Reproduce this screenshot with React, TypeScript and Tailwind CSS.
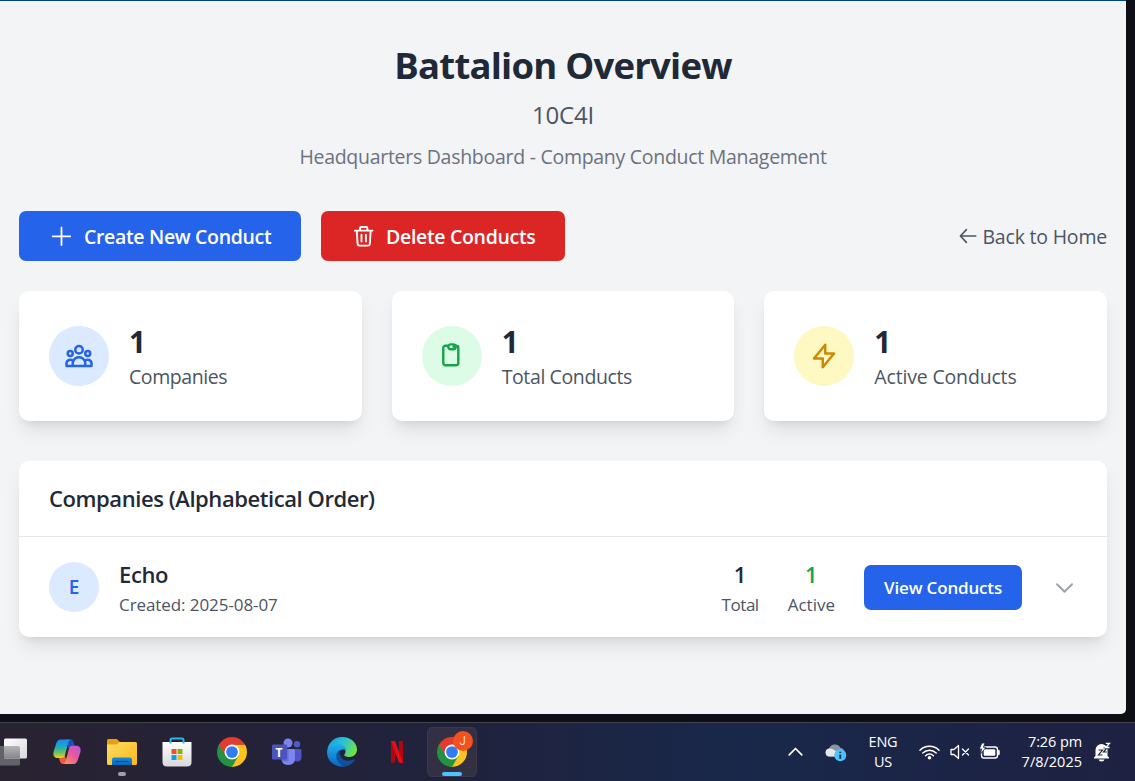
import React from "react";

function PlusIcon() {
  return (
    <svg className="h-5 w-5 shrink-0" viewBox="0 0 20 20" fill="none" stroke="currentColor" strokeWidth="1.8" strokeLinecap="round">
      <path d="M10.500 1.500v17.500M1.700 10.300h17.800" />
    </svg>
  );
}

function TrashIcon() {
  return (
    <svg className="h-[22px] w-5 shrink-0" viewBox="0 0 20 22" fill="none" stroke="currentColor" strokeWidth="1.9" strokeLinecap="round" strokeLinejoin="round">
      <path d="M.9 5.600h17.600M2.700 5.800l.9 13.100c.1 1.100.8 1.700 1.800 1.700h8.600c1 0 1.700-.6 1.800-1.700l.9-13.100M6 5.400V3.200C6 2.500 6.500 2 7.200 2h5c.7 0 1.200.5 1.200 1.200v2.200M7.500 9.600v7M11.900 9.600v7" />
    </svg>
  );
}

function BackIcon() {
  return (
    <svg className="h-[16px] w-[18px] shrink-0" viewBox="0 0 18 16" fill="none" stroke="currentColor" strokeWidth="1.6" strokeLinecap="round" strokeLinejoin="round">
      <path d="M7.4 1.6 1.4 8l6 6.4M1.6 8h15.2" />
    </svg>
  );
}

function GroupIcon() {
  return (
    <svg className="h-[30px] w-[30px]" viewBox="0 0 24 24" fill="none" stroke="currentColor" strokeWidth="2" strokeLinecap="round" strokeLinejoin="round">
      <path d="M17 20h5v-2a3 3 0 00-5.356-1.857M17 20H7m10 0v-2c0-.656-.126-1.283-.356-1.857M7 20H2v-2a3 3 0 015.356-1.857M7 20v-2c0-.656.126-1.283.356-1.857m0 0a5.002 5.002 0 019.288 0M15 7a3 3 0 11-6 0 3 3 0 016 0zm6 3a2 2 0 11-4 0 2 2 0 014 0zM7 10a2 2 0 11-4 0 2 2 0 014 0z" />
    </svg>
  );
}

function ClipboardIcon() {
  return (
    <svg className="h-[30px] w-[30px]" viewBox="0 0 30 30" fill="none" stroke="currentColor" strokeWidth="2.4" strokeLinecap="round" strokeLinejoin="round">
      <path d="M10.500 4.800H8.400A2.100 2.100 0 0 0 6.300 6.900v15.200a2.100 2.100 0 0 0 2.100 2.100h10.800a2.100 2.100 0 0 0 2.100-2.100V6.900a2.100 2.100 0 0 0-2.100-2.100h-2" />
      <rect x="11.300" y="3.400" width="7.400" height="4.900" rx="2.450" />
      <path d="M16.200 5.800h.8" strokeWidth="2" />
    </svg>
  );
}

function BoltIcon() {
  return (
    <svg className="h-[30px] w-[30px]" viewBox="0 0 24 24" fill="none" stroke="currentColor" strokeWidth="2" strokeLinecap="round" strokeLinejoin="round">
      <path d="M13 10V3L4 14h7v7l9-11h-7z" />
    </svg>
  );
}

type Stat = { label: string; value: number; tone: string; tracking: string; icon: React.ReactNode };

const stats: Stat[] = [
  { label: "Companies", value: 1, tone: "bg-[#dbeafe] text-[#2563eb]", tracking: "tracking-[-0.43px]", icon: <GroupIcon /> },
  { label: "Total Conducts", value: 1, tone: "bg-[#dcfce7] text-[#16a34a]", tracking: "tracking-[-0.38px]", icon: <ClipboardIcon /> },
  { label: "Active Conducts", value: 1, tone: "bg-[#fef9c3] text-[#ca8a04]", tracking: "tracking-[-0.17px]", icon: <BoltIcon /> },
];

const cardShadow = "shadow-[0_12px_19px_-4px_rgba(0,0,0,0.1),0_5px_8px_-5px_rgba(0,0,0,0.1)]";

function StatCard({ stat }: { stat: Stat }) {
  return (
    <div className={`flex h-[130px] items-center rounded-[10px] bg-white px-[30px] ${cardShadow}`}>
      <div className={`flex h-[60px] w-[60px] items-center justify-center rounded-full ${stat.tone}`}>{stat.icon}</div>
      <div className="ml-5 pt-[2px]">
        <p className="text-[29.5px] leading-10 font-bold text-[#1f2937]">{stat.value}</p>
        <p className={`text-[19.5px] leading-[30px] text-[#4b5563] ${stat.tracking}`}>{stat.label}</p>
      </div>
    </div>
  );
}

function ChromeIcon({ id }: { id: string }) {
  return (
    <svg className="h-[30px] w-[30px]" viewBox="0 0 48 48">
      <defs>
        <clipPath id={id}><circle cx="24" cy="24" r="24" /></clipPath>
      </defs>
      <g clipPath={`url(#${id})`}>
        <path fill="#e33b2e" d="M0 0h48v12.5H24L13.6 30 0 12z" />
        <path fill="#fcc31e" d="M24 12.5h24V48H20l14.4-18z" />
        <path fill="#229342" d="M3.2 12 13.6 30 24 36l10.4-6L24 48H0V12z" />
      </g>
      <circle cx="24" cy="24" r="12" fill="#fff" />
      <circle cx="24" cy="24" r="9.4" fill="#2f7df0" />
    </svg>
  );
}

function TaskViewIcon() {
  return (
    <svg className="h-[30px] w-7" viewBox="0 0 28 30">
      <defs>
        <linearGradient id="tv" x1="0" y1="0" x2="1" y2="1"><stop stopColor="#fff" /><stop offset="1" stopColor="#d9d9db" /></linearGradient>
        <linearGradient id="tvb" x1="0" y1="0" x2="0" y2="1"><stop stopColor="#b5b4b8" /><stop offset="1" stopColor="#86858a" /></linearGradient>
      </defs>
      <rect x="-8" y="9" width="28" height="19.5" rx="1.5" fill="#63616a" />
      <rect x="4" y="1.500" width="23" height="20" rx="1.500" fill="url(#tv)" />
      <path d="M4 9h14.500a1.500 1.500 0 0 1 1.500 1.500V21.500H4z" fill="url(#tvb)" />
    </svg>
  );
}

function CopilotIcon() {
  return (
    <svg className="h-[30px] w-[30px]" viewBox="0 0 30 30">
      <defs>
        <linearGradient id="cpa" x1="0" y1="0" x2="0" y2="1"><stop stopColor="#2189f3" /><stop offset=".35" stopColor="#14a8cd" /><stop offset=".7" stopColor="#65c060" /><stop offset="1" stopColor="#f2cf1c" /></linearGradient>
        <linearGradient id="cpb" x1="1" y1="0" x2="0" y2="1"><stop stopColor="#a95bea" /><stop offset=".45" stopColor="#e8559f" /><stop offset="1" stopColor="#ff9d50" /></linearGradient>
      </defs>
      <path d="M14 2.500h4.500c1.800 0 2.600 1 3 2.600l1.300 3.800h-2.700c-1.700 0-2.800 1-3.300 2.800z" fill="#1b4fc4" />
      <path d="M15.500 27H11c-1.700 0-2.500-1-3-2.600l-1.200-3.800h3c1.700 0 2.600-1 3-2.500z" fill="#ee5a3b" />
      <path d="M9 2.500H19c-1.500.3-2.300 1.500-2.700 2.900l-3.400 13c-.6 1.800-1.600 2.500-3.300 2.500H5.500c-3.200 0-4.600-2.400-4-6L4.200 6.500C5 3.800 6.500 2.500 9 2.500z" fill="url(#cpa)" />
      <path d="M21 27H11c1.500-.3 2.300-1.500 2.700-2.900l3.400-12.800c.6-1.800 1.600-2.500 3.300-2.500h4.100c3.200 0 4.600 2.400 4 6L25.800 23c-.8 2.700-2.300 4-4.800 4z" fill="url(#cpb)" />
    </svg>
  );
}

function FolderIcon() {
  return (
    <svg className="h-[30px] w-[30px]" viewBox="0 0 30 30">
      <defs>
        <linearGradient id="fo" x1="0" y1="0" x2="1" y2="1"><stop stopColor="#ffdc66" /><stop offset="1" stopColor="#fbb914" /></linearGradient>
        <linearGradient id="fb" x1="0" y1="0" x2="0" y2="1"><stop stopColor="#148ce0" /><stop offset="1" stopColor="#0867b9" /></linearGradient>
      </defs>
      <path d="M0 3.500Q0 2 1.500 2h8.300l3.200 3v5H0z" fill="#e5a00d" />
      <path d="M0 7.500h9.500L13 5h15.500Q30 5 30 6.500v20q0 1.500-1.500 1.500h-27Q0 28 0 26.500z" fill="url(#fo)" />
      <path d="M5 28v-5.500Q5 20.500 7 20.500h16q2 0 2 2V28z" fill="url(#fb)" />
      <path d="M8.500 24.500h13" stroke="#064c92" strokeWidth="1.200" />
    </svg>
  );
}

function StoreIcon() {
  return (
    <svg className="h-[30px] w-[30px]" viewBox="0 0 30 30">
      <defs><linearGradient id="st" x1="0" y1="0" x2="0" y2="1"><stop stopColor="#fff" /><stop offset="1" stopColor="#d7d8dc" /></linearGradient></defs>
      <path d="M.5 5h29v20q0 4.500-4.500 4.500H5Q.5 29.500.5 25z" fill="url(#st)" />
      <path d="M8.500 6.500V3q0-1.500 1.500-1.500h10q1.500 0 1.500 1.500v3.500" fill="none" stroke="#27b7ee" strokeWidth="2" />
      <path fill="#f25022" d="M9.500 12h5v5h-5z" />
      <path fill="#7fba00" d="M15.500 12h5v5h-5z" />
      <path fill="#00a4ef" d="M9.500 18h5v5h-5z" />
      <path fill="#ffb900" d="M15.500 18h5v5h-5z" />
    </svg>
  );
}

function TeamsIcon() {
  return (
    <div className="relative h-[30px] w-[30px]">
      <svg className="h-[30px] w-[30px]" viewBox="0 0 30 30">
        <circle cx="25" cy="7.200" r="3.200" fill="#5059c9" />
        <path d="M20 12h8q1.500 0 1.500 1.500v6.500q0 4.500-4.500 4.500-3.500 0-5-3z" fill="#4f55c4" />
        <circle cx="16" cy="6" r="4.500" fill="#7b83eb" />
        <path d="M9.500 12h12q1.500 0 1.500 1.500V21q0 7-6.800 7T9.500 21z" fill="#7d85ee" />
        <path d="M11 12h5.500v12.500H10z" fill="#5a60c7" opacity=".6" />
        <rect x="0" y="7.500" width="15" height="15" rx="1.300" fill="#4b53bc" />
      </svg>
      <span className="absolute top-[7.5px] left-0 w-[15px] text-center font-['Open_Sans',sans-serif] text-[12px] leading-[15px] font-bold text-white">T</span>
    </div>
  );
}

function EdgeIcon() {
  return (
    <svg className="h-[30px] w-[30px]" viewBox="0 0 30 30">
      <defs>
        <linearGradient id="ea" x1="0" y1=".2" x2="1" y2=".6"><stop stopColor="#1b9de2" /><stop offset=".5" stopColor="#2bc3d2" /><stop offset="1" stopColor="#74e33d" /></linearGradient>
        <linearGradient id="eb" x1="0" y1="0" x2="0" y2="1"><stop stopColor="#1db0ec" /><stop offset="1" stopColor="#0c62c2" /></linearGradient>
      </defs>
      <path d="M.3 13.500C1 6 7 0 15 0c9 0 15 6 15 12.500 0 4.500-3.300 7.500-7.500 7.500-3.600 0-5.700-1.300-5.200-2.300.7-1 1.200-1.800 1.200-3.200 0-3-3.300-6-8-6-5 0-8.500 2.500-10.200 5z" fill="url(#ea)" />
      <path d="M.1 14C1.500 10 5.500 7 10.500 7c5.500 0 9 3.500 9 7-2-2.500-7.300-2-8.600 2.500C9 23 14 29.200 19 29.500 9 31.500-.5 24.500.1 14z" fill="url(#eb)" />
      <path d="M12.500 13.300c-3.500 2-4.300 7-1.500 11 2.200 3.500 6.500 5.500 9.500 4.600 3-1 5.500-3.200 7-5.600.5-.8-.2-1.200-1-.8-6.500 3-14.500.3-14-9.200z" fill="#12509d" />
    </svg>
  );
}

function NetflixIcon() {
  return (
    <svg className="h-[22px] w-[14px]" viewBox="0 0 14 22">
      <path d="M1 0h4v21.500L1 22zM9 0h4v22l-4-.5z" fill="#b1060f" />
      <path d="M1 0h4l8 22-4-.5z" fill="#ec0c17" />
    </svg>
  );
}

function Taskbar() {
  return (
    <footer className="flex h-[59px] w-full justify-between overflow-hidden border-t border-[#42434e] bg-linear-to-r from-[#292231] via-[#20223d] via-40% to-[#1d2243] font-['Open_Sans',sans-serif] text-white">
      <div className="flex items-start pt-[4px]">
        <div className="flex h-[50px] w-[28px] items-center"><TaskViewIcon /></div>
        <div className="ml-[14px] flex h-[50px] w-[50px] items-center justify-center"><CopilotIcon /></div>
        <div className="relative ml-[5px] flex h-[50px] w-[50px] items-center justify-center">
          <FolderIcon />
          <span className="absolute bottom-[1px] left-[21px] h-1 w-2 rounded-full bg-[#a09fa9]" />
        </div>
        <div className="ml-[4.5px] flex h-[50px] w-[50px] items-center justify-center"><StoreIcon /></div>
        <div className="ml-[5px] flex h-[50px] w-[50px] items-center justify-center"><ChromeIcon id="chrome-a" /></div>
        <div className="ml-[5px] flex h-[50px] w-[50px] items-center justify-center"><TeamsIcon /></div>
        <div className="ml-[5px] flex h-[50px] w-[50px] items-center justify-center"><EdgeIcon /></div>
        <div className="ml-[5px] flex h-[50px] w-[50px] items-center justify-center"><NetflixIcon /></div>
        <div className="relative ml-[5px] flex h-[50px] w-[50px] items-center justify-center rounded-[5px] border border-[#3c394b] bg-[#333044]">
          <ChromeIcon id="chrome-b" />
          <span className="absolute top-[3px] right-[3px] flex h-5 w-5 items-center justify-center rounded-full bg-[#f4511e] font-['Roboto',sans-serif] text-[12px] text-[#ffd9cc]">J</span>
          <span className="absolute bottom-0 left-[14px] h-1 w-5 rounded-full bg-[#4cc2ff]" />
        </div>
      </div>

      <div className="flex h-[58px] w-[658px] items-center justify-end bg-linear-to-r from-transparent via-[#19284a] via-40% to-[#1e2142] pr-[24px] pb-[1px]">
        <svg className="h-[9px] w-[15px]" viewBox="0 0 15 9" fill="none" stroke="#fff" strokeWidth="1.700" strokeLinecap="round" strokeLinejoin="round"><path d="M1.200 7.800 7.500 1.500l6.300 6.300" /></svg>
        <svg className="ml-[22px] h-[20px] w-[22px]" viewBox="0 0 22 20">
          <path d="M3.500 14.500A4 4 0 0 1 4 6.700 6.200 6.200 0 0 1 15.500 6 4.500 4.500 0 0 1 17 14.500z" fill="#8e949f" />
          <path d="M4 14.500A4 4 0 0 1 4 6.600c3-.6 5 1 7.500 3.200l2 4.700z" fill="#e5e7ea" />
          <circle cx="15.300" cy="13.300" r="6" fill="#4cc2ff" />
          <path d="M15.300 12.500v4.200M15.300 9.700v1.400" stroke="#0c2a45" strokeWidth="1.800" />
        </svg>
        <div className="ml-[20px] w-[32px] text-center text-[14.5px] leading-5 tracking-[-0.2px]"><p>ENG</p><p>US</p></div>
        <svg className="ml-[20px] h-[16px] w-[21px]" viewBox="0 0 21 16" fill="none" stroke="#fff" strokeWidth="1.500" strokeLinecap="round">
          <path d="M1 6.300a13.400 13.400 0 0 1 19 0M3.800 9a9.500 9.500 0 0 1 13.400 0M6.600 11.700a5.500 5.500 0 0 1 7.800 0" />
          <circle cx="10.500" cy="13.700" r="1.800" fill="#fff" stroke="none" />
        </svg>
        <svg className="ml-[10px] h-[16px] w-[20px]" viewBox="0 0 20 16" fill="none" stroke="#fff" strokeWidth="1.300" strokeLinecap="round" strokeLinejoin="round">
          <path d="M1 5.500h3L8.500 1.500v13L4 10.500H1zM12.500 5l6 6M18.500 5l-6 6" />
        </svg>
        <svg className="ml-[9px] h-[18px] w-[22px]" viewBox="0 0 22 18">
          <rect x="2.500" y="4" width="16" height="11" rx="2.500" fill="none" stroke="#fff" strokeWidth="1.400" />
          <rect x="4.700" y="6.200" width="11.600" height="6.600" rx="1" fill="#fff" />
          <path d="M19.200 7.500h1v4h-1z" fill="#fff" stroke="#fff" strokeLinejoin="round" />
          <path d="M3 0 .2 6h2.600L1.500 11 7 4.300H4.300L6 0z" fill="#fff" stroke="#1b2547" strokeWidth=".8" />
        </svg>
        <div className="ml-[18px] w-[63px] text-right text-[14.5px] leading-5"><p className="tracking-[-0.1px]">7:26 pm</p><p>7/8/2025</p></div>
        <svg className="ml-[11px] h-[20px] w-[18px]" viewBox="0 0 18 20">
          <path d="M2.500 14V8a6 6 0 0 1 12 0v6l1.500 1.500v1H1v-1z" fill="#fff" />
          <path d="M5.500 17.500h6q-.5 2-3 2t-3-2z" fill="#fff" />
          <path d="M5.500 8h4l-4 5h4M10.500 6h3.300l-3.300 4h3.300" fill="none" stroke="#1d2445" strokeWidth="1.200" />
          <path d="M12.800 1.300h3.700L12.800 5.500h3.700" fill="none" stroke="#fff" strokeWidth="1.300" />
        </svg>
      </div>
    </footer>
  );
}

export default function App() {
  return (
    <div className="flex h-[781px] w-full flex-col overflow-hidden bg-[#0e0e17]">
      <main className="h-[714px] w-[1126px] rounded-br-[5px] border-t border-[#00417f] bg-[#f3f4f6] px-[19px] pt-[42px] font-['Open_Sans',sans-serif]">
        <header className="flex flex-col items-center">
          <h1 className="text-[36.5px] leading-[45px] font-bold tracking-[-0.78px] text-[#1f2937]">Battalion Overview</h1>
          <p className="mt-[9px] text-[24px] leading-[35px] tracking-[-0.2px] text-[#4b5563]">10C4I</p>
          <p className="mt-[10px] text-[19.5px] leading-[30px] tracking-[-0.28px] text-[#6b7280]">Headquarters Dashboard - Company Conduct Management</p>
        </header>

        <div className="mt-[39px] flex h-[50px] items-center justify-between">
          <div className="flex gap-5">
            <button className="flex h-[50px] w-[282px] items-center rounded-[7px] bg-[#2563eb] pl-[32px] text-[19.5px] font-semibold tracking-[-0.34px] text-white">
              <PlusIcon />
              <span className="ml-[13px] pt-[2px]">Create New Conduct</span>
            </button>
            <button className="flex h-[50px] w-[244px] items-center rounded-[7px] bg-[#dc2626] pl-[33px] text-[19.5px] font-semibold tracking-[-0.32px] text-white">
              <TrashIcon />
              <span className="ml-[12px] pt-[2px]">Delete Conducts</span>
            </button>
          </div>
          <a className="flex items-center gap-[5px] text-[19.5px] tracking-[-0.2px] text-[#4b5563]">
            <BackIcon />
            <span className="pt-[2px]">Back to Home</span>
          </a>
        </div>

        <section className="mt-[30px] grid grid-cols-3 gap-[30px]">
          {stats.map((s) => <StatCard key={s.label} stat={s} />)}
        </section>

        <section className={`mt-10 rounded-[10px] bg-white ${cardShadow}`}>
          <div className="flex h-[76px] items-center border-b border-[#e5e7eb] px-[30px]">
            <h2 className="text-[22px] font-semibold tracking-[-0.43px] text-[#1f2937]">Companies (Alphabetical Order)</h2>
          </div>
          <div className="flex h-[100px] items-center px-[30px]">
            <div className="flex h-[50px] w-[50px] items-center justify-center rounded-full bg-[#dbeafe] pt-px text-[19px] font-semibold text-[#2563eb]">E</div>
            <div className="ml-5">
              <h3 className="text-[22px] leading-[35px] font-semibold tracking-[-0.4px] text-[#1f2937]">Echo</h3>
              <p className="text-[17px] leading-[25px] tracking-[-0.08px] text-[#4b5563]">Created: 2025-08-07</p>
            </div>
            <div className="ml-auto flex items-center">
              <div className="text-center">
                <p className="text-[22px] leading-[35px] font-semibold text-[#1f2937]">1</p>
                <p className="text-[17px] leading-[25px] tracking-[-0.45px] text-[#4b5563]">Total</p>
              </div>
              <div className="ml-[29px] text-center">
                <p className="text-[22px] leading-[35px] font-semibold text-[#16a34a]">1</p>
                <p className="text-[17px] leading-[25px] text-[#4b5563]">Active</p>
              </div>
              <button className="ml-[29px] h-[45px] w-[158px] rounded-[7px] bg-[#2563eb] pt-[2px] text-[17px] font-semibold tracking-[-0.17px] text-white">View Conducts</button>
              <svg className="mt-[2px] mr-[3px] ml-[33px] h-[12px] w-[19px]" viewBox="0 0 19 12" fill="none" stroke="#9ca3af" strokeWidth="2" strokeLinecap="round" strokeLinejoin="round">
                <path d="m2 2.200 7.500 7.500L17 2.200" />
              </svg>
            </div>
          </div>
        </section>
      </main>
      <div className="h-[8px] shrink-0" />
      <Taskbar />
    </div>
  );
}
